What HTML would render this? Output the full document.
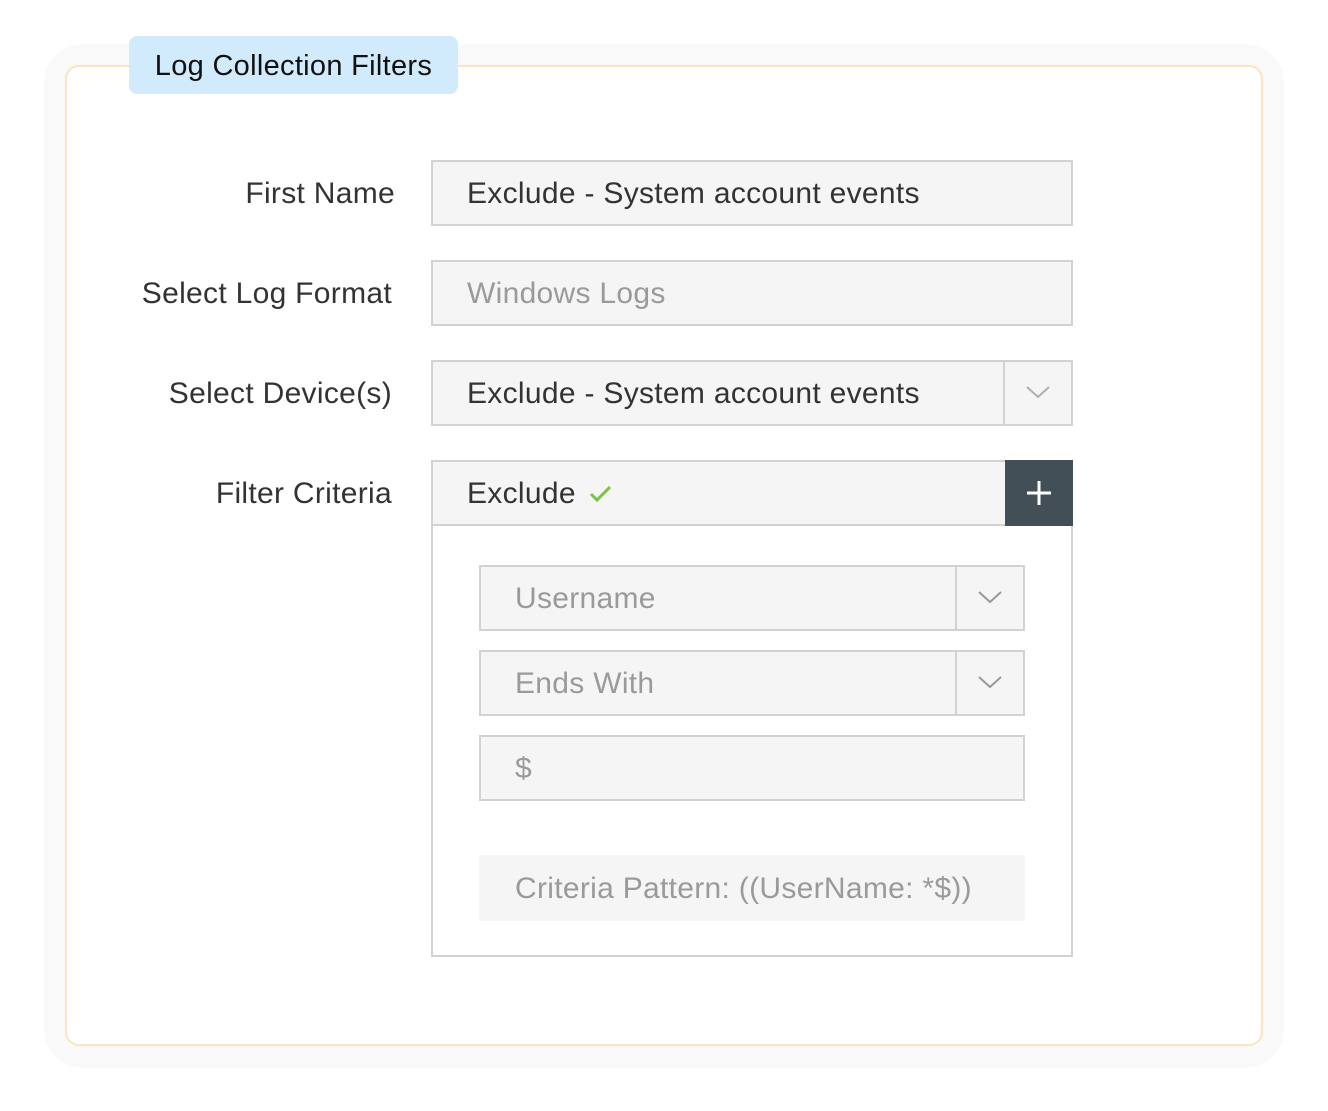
<!DOCTYPE html>
<html><head><style>
*{box-sizing:border-box;margin:0;padding:0}
body{width:1328px;height:1111px;background:#fff;position:relative;font-family:"Liberation Sans",sans-serif;overflow:hidden}
.a{position:absolute}
.shadow{left:44px;top:44px;width:1240px;height:1024px;border-radius:40px;background:#f9f9f9}
.card{left:65px;top:65px;width:1198px;height:981px;border:2px solid #fde3c4;border-radius:14px;background:#fff}
.tag{left:129px;top:36px;width:329px;height:58px;background:#d2ebfc;border-radius:8px;font-size:29px;letter-spacing:0.3px;color:#111;line-height:60px;text-align:center}
.lbl{font-size:30px;letter-spacing:0.3px;color:#333;text-align:right;width:260px;left:132px}
.box{border:2px solid #d2d2d2;background:#f5f5f5;font-size:30px;letter-spacing:0.3px;line-height:64px;padding-left:34px;color:#333}
.ph{color:#9a9a9a}
.dd{position:absolute;right:0;top:0;bottom:0;width:68px;border-left:2px solid #d2d2d2}
</style></head><body>
<div class="a shadow"></div>
<div class="a card"></div>
<div class="a tag">Log Collection Filters</div>

<div class="a lbl" style="top:177px;width:263px">First Name</div>
<div class="a box" style="left:431px;top:160px;width:642px;height:66px">Exclude - System account events</div>

<div class="a lbl" style="top:277px">Select Log Format</div>
<div class="a box ph" style="left:431px;top:260px;width:642px;height:66px">Windows Logs</div>

<div class="a lbl" style="top:377px">Select Device(s)</div>
<div class="a box" style="left:431px;top:360px;width:642px;height:66px">Exclude - System account events
<div class="dd"><svg width="66" height="62" viewBox="0 0 66 62"><path d="M22 25l11 10 11-10" fill="none" stroke="#b0b0b0" stroke-width="2"/></svg></div></div>

<div class="a lbl" style="top:477px">Filter Criteria</div>
<div class="a" style="left:431px;top:460px;width:642px;height:497px;border:2px solid #d2d2d2;background:#fff"></div>
<div class="a box" style="left:431px;top:460px;width:642px;height:66px">Exclude <svg width="26" height="22" viewBox="0 0 26 22" style="vertical-align:-2px;margin-left:4px"><path d="M3 11l6 6 13-13" fill="none" stroke="#7cc241" stroke-width="3"/></svg>
<div class="a" style="right:-2px;top:-2px;width:68px;height:66px;background:#434f57"><svg width="68" height="66" viewBox="0 0 68 66"><path d="M34 21v24M22 33h24" stroke="#fff" stroke-width="3"/></svg></div></div>

<div class="a box ph" style="left:479px;top:565px;width:546px;height:66px">Username
<div class="dd"><svg width="66" height="62" viewBox="0 0 66 62"><path d="M22 25l11 10 11-10" fill="none" stroke="#999" stroke-width="2"/></svg></div></div>
<div class="a box ph" style="left:479px;top:650px;width:546px;height:66px">Ends With
<div class="dd"><svg width="66" height="62" viewBox="0 0 66 62"><path d="M22 25l11 10 11-10" fill="none" stroke="#999" stroke-width="2"/></svg></div></div>
<div class="a box ph" style="left:479px;top:735px;width:546px;height:66px">$</div>
<div class="a box ph" style="left:479px;top:855px;width:546px;height:66px;border:none;padding-left:36px;line-height:68px">Criteria Pattern: ((UserName: *$))</div>
</body></html>
